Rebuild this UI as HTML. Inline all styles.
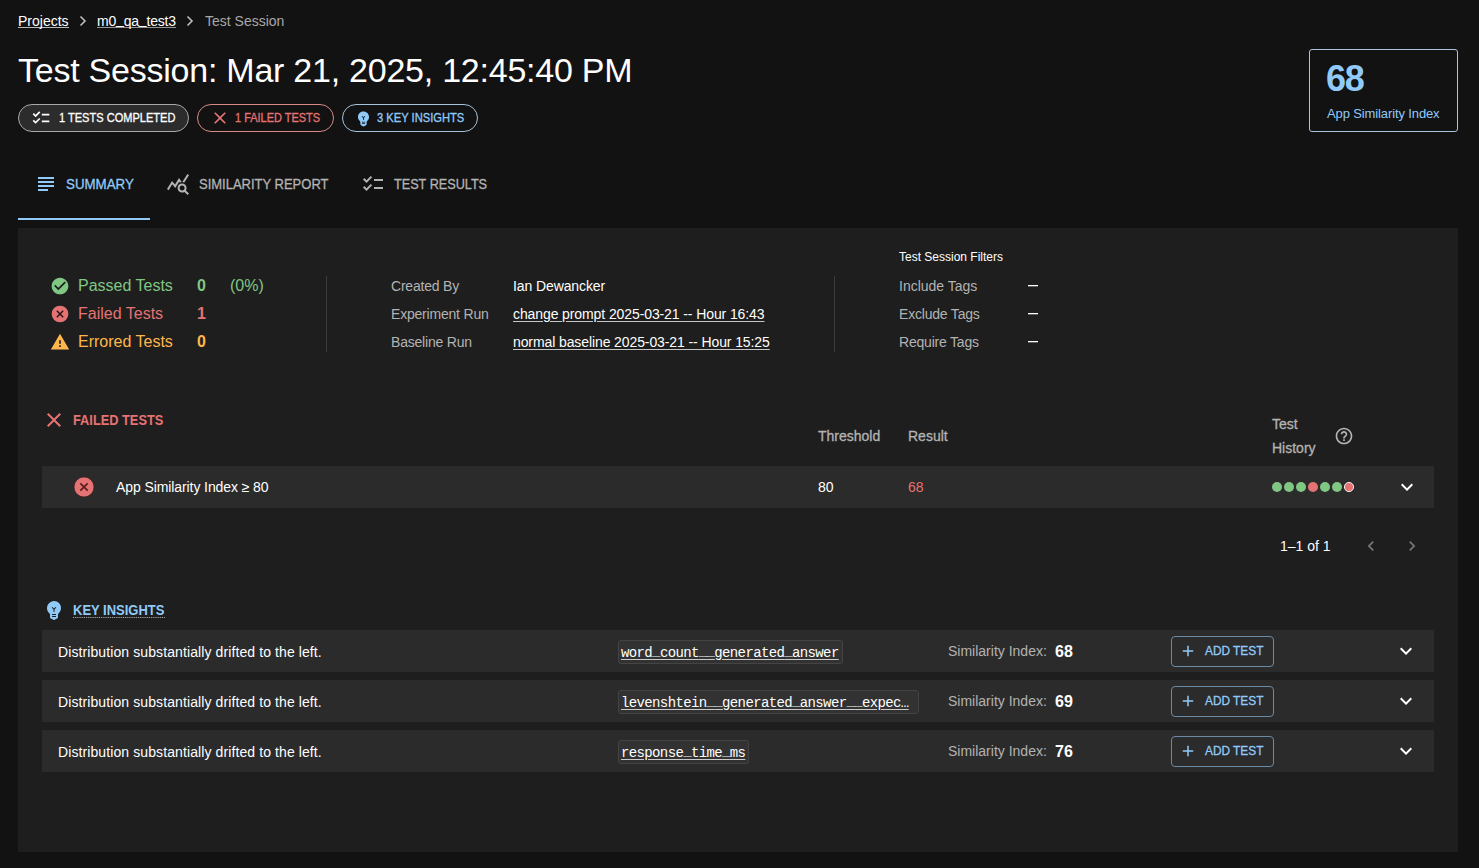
<!DOCTYPE html>
<html><head><meta charset="utf-8">
<style>
*{margin:0;padding:0;box-sizing:border-box}
html,body{width:1479px;height:868px;overflow:hidden;background:#121212;font-family:"Liberation Sans",sans-serif;color:#fff}
.a{position:absolute;white-space:nowrap;line-height:1}
svg{position:absolute;display:block}
.med{font-weight:normal;-webkit-text-stroke:0.3px currentColor}
.us{position:relative;top:-2px}
.ul{text-decoration:underline;text-underline-offset:2px;text-decoration-color:rgba(255,255,255,0.75)}
.chip{position:absolute;border-radius:14px;border:1px solid}
.panel{position:absolute;left:18px;top:228px;width:1440px;height:624px;background:#1e1e1e}
.row{position:absolute;left:42px;width:1392px;background:#2b2b2b}
.vsep{position:absolute;width:1px;background:#3d3d3d}
.codechip{position:absolute;left:618px;height:24px;border:1px solid #444;background:#323232;border-radius:3px}
.btn{position:absolute;left:1171px;width:103px;height:31px;border:1px solid #6a8aa6;border-radius:4px}
</style></head>
<body>
<!-- breadcrumb -->
<div class="a" id="bc1" style="left:18px;top:14px;font-size:14px;color:#fff">Projects</div>
<div style="position:absolute;left:18px;top:27px;width:51px;height:1px;background:rgba(255,255,255,0.7)"></div>
<svg style="left:78px;top:15px" width="10" height="12" viewBox="0 0 10 12"><path d="M2.5 1.5 L7 6 L2.5 10.5" stroke="#bdbdbd" stroke-width="1.6" fill="none"/></svg>
<div class="a" id="bc2" style="left:97px;top:14px;font-size:14px;color:#fff;letter-spacing:-0.2px">m0<span style="position:relative;top:-2px">_</span>qa<span style="position:relative;top:-2px">_</span>test3</div>
<div style="position:absolute;left:97px;top:27px;width:79px;height:1px;background:rgba(255,255,255,0.55)"></div>
<svg style="left:185px;top:15px" width="10" height="12" viewBox="0 0 10 12"><path d="M2.5 1.5 L7 6 L2.5 10.5" stroke="#bdbdbd" stroke-width="1.6" fill="none"/></svg>
<div class="a" id="bc3" style="left:205px;top:14px;font-size:14px;color:#a8a8a8">Test Session</div>

<!-- title -->
<div class="a" id="title" style="left:18px;top:53px;font-size:34px;color:#fff;letter-spacing:-0.24px">Test Session: Mar 21, 2025, 12:45:40 PM</div>

<!-- chips -->
<div class="chip" style="left:18px;top:104px;width:171px;height:28px;background:#2c2c2c;border-color:#a8a8a8"></div>
<div class="a med" id="chip1" style="left:59px;top:112px;font-size:12px;color:#fff;transform:scaleX(0.92);transform-origin:0 0">1 TESTS COMPLETED</div>
<div class="chip" style="left:197px;top:104px;width:137px;height:28px;border-color:#d58a88"></div>
<div class="a med" id="chip2" style="left:235px;top:112px;font-size:12px;color:#e57373;transform:scaleX(0.914);transform-origin:0 0">1 FAILED TESTS</div>
<div class="chip" style="left:342px;top:104px;width:136px;height:28px;border-color:#a6c2dc"></div>
<div class="a med" id="chip3" style="left:377px;top:112px;font-size:12px;color:#90caf9;transform:scaleX(0.93);transform-origin:0 0">3 KEY INSIGHTS</div>

<!-- similarity box -->
<div style="position:absolute;left:1309px;top:49px;width:149px;height:83px;border:1px solid #a9c5de;border-radius:3px"></div>
<div class="a" id="bigval" style="left:1326px;top:60.8px;font-size:36px;font-weight:bold;color:#90caf9;letter-spacing:-1.2px">68</div>
<div class="a" id="simlabel" style="left:1327px;top:107px;font-size:13px;color:#90caf9;letter-spacing:-0.12px">App Similarity Index</div>

<!-- tabs -->
<div class="a med" id="tab1" style="left:65.8px;top:177px;font-size:14px;color:#90caf9;transform:scaleX(0.951);transform-origin:0 0">SUMMARY</div>
<div class="a med" id="tab2" style="left:198.5px;top:177px;font-size:14px;color:#b3b3b3;transform:scaleX(0.928);transform-origin:0 0">SIMILARITY REPORT</div>
<div class="a med" id="tab3" style="left:394.3px;top:177px;font-size:14px;color:#b3b3b3;transform:scaleX(0.904);transform-origin:0 0">TEST RESULTS</div>
<div style="position:absolute;left:18px;top:218px;width:132px;height:2px;background:#90caf9"></div>


<svg style="left:31px;top:108px" width="20" height="20" viewBox="0 0 24 24"><path fill="#fff" d="M22 7h-9v2h9V7zm0 8h-9v2h9v-2zM5.54 11 2 7.46l1.41-1.41 2.12 2.12 4.24-4.24 1.41 1.41L5.54 11zm0 8L2 15.46l1.41-1.41 2.12 2.12 4.24-4.24 1.41 1.41L5.54 19z"/></svg>
<svg style="left:210px;top:108px" width="20" height="20" viewBox="0 0 24 24"><path fill="#e57373" d="M19 6.41 17.59 5 12 10.59 6.41 5 5 6.41 10.59 12 5 17.59 6.41 19 12 13.41 17.59 19 19 17.59 13.41 12z"/></svg>
<svg style="left:354px;top:109px" width="19" height="19" viewBox="0 0 24 24"><path fill="#90caf9" d="M12 3c-.46 0-.93.04-1.4.14-2.76.53-4.96 2.76-5.48 5.52-.48 2.61.48 5.01 2.22 6.56.43.38.66.91.66 1.47V19c0 1.1.9 2 2 2h.28c.35.6.98 1 1.72 1s1.38-.4 1.72-1H14c1.1 0 2-.9 2-2v-2.31c0-.55.22-1.09.64-1.46C18.09 13.95 19 12.08 19 10c0-3.87-3.13-7-7-7zm2 16h-4v-1h4v1zm0-2h-4v-1h4v1zm-1.5-5.59V14h-1v-2.59L9.67 9.59l.71-.71L12 10.5l1.62-1.62.71.71-1.83 1.83z"/></svg>
<svg style="left:34px;top:172px" width="24" height="24" viewBox="0 0 24 24"><path fill="#90caf9" d="M14 17H4v2h10v-2zm6-8H4v2h16V9zM4 15h16v-2H4v2zM4 5v2h16V5H4z"/></svg>
<svg style="left:166px;top:172px" width="24" height="24" viewBox="0 0 24 24"><path fill="#b3b3b3" d="M19.88 18.47c.44-.7.7-1.51.7-2.39 0-2.49-2.01-4.5-4.5-4.5s-4.5 2.01-4.5 4.5 2.01 4.5 4.49 4.5c.88 0 1.7-.26 2.39-.7L21.58 23 23 21.58l-3.12-3.11zm-3.8.11c-1.38 0-2.5-1.12-2.5-2.5s1.12-2.5 2.5-2.5 2.5 1.12 2.5 2.5-1.12 2.5-2.5 2.5zm-.36-8.5c-.74.02-1.45.18-2.1.45l-.55-.83-3.8 6.18-3.01-3.52-3.630 5.81L1 17l5-8 3 3.5L13 6l2.72 4.08zm2.59.5c-.64-.28-1.33-.45-2.05-.49L21.38 2 23 3.18l-4.69 7.4z"/></svg>
<svg style="left:361px;top:172px" width="24" height="24" viewBox="0 0 24 24"><path fill="#b3b3b3" d="M22 7h-9v2h9V7zm0 8h-9v2h9v-2zM5.54 11 2 7.46l1.41-1.41 2.12 2.12 4.24-4.24 1.41 1.41L5.54 11zm0 8L2 15.46l1.41-1.41 2.12 2.12 4.24-4.24 1.41 1.41L5.54 19z"/></svg>

<!-- panel -->
<div class="panel"></div>


<!-- stats -->
<svg style="left:50px;top:276px" width="20" height="20" viewBox="0 0 24 24"><path fill="#81c784" d="M12 2C6.48 2 2 6.48 2 12s4.48 10 10 10 10-4.48 10-10S17.52 2 12 2zm-2 15-5-5 1.41-1.41L10 14.17l7.59-7.59L19 8l-9 9z"/></svg>
<div class="a" id="st1" style="left:78px;top:277.6px;font-size:16px;color:#81c784">Passed Tests</div>
<div class="a" id="st1n" style="left:197px;top:277.6px;font-size:16px;font-weight:bold;color:#81c784">0</div>
<div class="a" id="st1p" style="left:230px;top:277.6px;font-size:16px;color:#81c784">(0%)</div>
<svg style="left:50px;top:304px" width="20" height="20" viewBox="0 0 24 24"><circle cx="12" cy="12" r="10" fill="#e57373"/><path d="M8.2 8.2L15.8 15.8M15.8 8.2L8.2 15.8" stroke="#2a1414" stroke-width="1.8"/></svg>
<div class="a" id="st2" style="left:78px;top:305.8px;font-size:16px;color:#e57373">Failed Tests</div>
<div class="a" id="st2n" style="left:197px;top:305.8px;font-size:16px;font-weight:bold;color:#e57373">1</div>
<svg style="left:50px;top:332px" width="20" height="20" viewBox="0 0 24 24"><path fill="#ffb74d" d="M1 21h22L12 2 1 21zm12-3h-2v-2h2v2zm0-4h-2v-4h2v4z"/></svg>
<div class="a" id="st3" style="left:78px;top:333.7px;font-size:16px;color:#ffb74d">Errored Tests</div>
<div class="a" id="st3n" style="left:197px;top:333.7px;font-size:16px;font-weight:bold;color:#ffb74d">0</div>
<div class="vsep" style="left:326px;top:276px;height:76px"></div>

<div class="a" id="cb1" style="left:391px;top:279px;font-size:14px;color:#b3b3b3;letter-spacing:-0.2px">Created By</div>
<div class="a" id="cb2" style="left:391px;top:307px;font-size:14px;color:#b3b3b3;letter-spacing:-0.2px">Experiment Run</div>
<div class="a" id="cb3" style="left:391px;top:335px;font-size:14px;color:#b3b3b3;letter-spacing:-0.2px">Baseline Run</div>
<div class="a" id="cv1" style="left:513px;top:279px;font-size:14px;color:#fff;letter-spacing:-0.1px">Ian Dewancker</div>
<div class="a ul" id="cv2" style="left:513px;top:307px;font-size:14px;color:#fff;letter-spacing:-0.1px">change prompt 2025-03-21 -- Hour 16:43</div>
<div class="a ul" id="cv3" style="left:513px;top:335px;font-size:14px;color:#fff;letter-spacing:-0.1px">normal baseline 2025-03-21 -- Hour 15:25</div>
<div class="vsep" style="left:834px;top:276px;height:76px"></div>

<div class="a" id="fh" style="left:899px;top:250.6px;font-size:12px;color:#fff">Test Session Filters</div>
<div class="a" id="f1" style="left:899px;top:279px;font-size:14px;color:#b3b3b3">Include Tags</div>
<div class="a" id="f2" style="left:899px;top:307px;font-size:14px;color:#b3b3b3;letter-spacing:-0.2px">Exclude Tags</div>
<div class="a" id="f3" style="left:899px;top:335px;font-size:14px;color:#b3b3b3;letter-spacing:-0.2px">Require Tags</div>
<div style="position:absolute;left:1028px;top:285px;width:10px;height:1px;background:#fff;box-shadow:0 1px 0 rgba(255,255,255,0.3)"></div>
<div style="position:absolute;left:1028px;top:313px;width:10px;height:1px;background:#fff;box-shadow:0 1px 0 rgba(255,255,255,0.3)"></div>
<div style="position:absolute;left:1028px;top:341px;width:10px;height:1px;background:#fff;box-shadow:0 1px 0 rgba(255,255,255,0.3)"></div>

<!-- failed tests -->
<svg style="left:42px;top:408px" width="24" height="24" viewBox="0 0 24 24"><path fill="#e57373" d="M19 6.41 17.59 5 12 10.59 6.41 5 5 6.41 10.59 12 5 17.59 6.41 19 12 13.41 17.59 19 19 17.59 13.41 12z"/></svg>
<div class="a" id="fth" style="left:73px;top:412.8px;font-size:14px;font-weight:bold;color:#e57373;transform:scaleX(0.914);transform-origin:0 0">FAILED TESTS</div>
<div class="a med" id="th1" style="left:818px;top:428.9px;font-size:14px;color:#b3b3b3">Threshold</div>
<div class="a med" id="th2" style="left:908px;top:428.9px;font-size:14px;color:#b3b3b3">Result</div>
<div class="a med" id="th3" style="left:1272px;top:416.9px;font-size:14px;color:#b3b3b3">Test</div>
<div class="a med" id="th4" style="left:1272px;top:440.8px;font-size:14px;color:#b3b3b3">History</div>
<svg style="left:1334px;top:426px" width="20" height="20" viewBox="0 0 24 24"><path fill="#b3b3b3" d="M11 18h2v-2h-2v2zm1-16C6.48 2 2 6.480 2 12s4.48 10 10 10 10-4.48 10-10S17.52 2 12 2zm0 18c-4.41 0-8-3.59-8-8s3.59-8 8-8 8 3.59 8 8-3.59 8-8 8zm0-14c-2.21 0-4 1.79-4 4h2c0-1.1.9-2 2-2s2 .9 2 2c0 2-3 1.75-3 5h2c0-2.25 3-2.5 3-5 0-2.21-1.79-4-4-4z"/></svg>
<div class="row" style="top:466px;height:42px"></div>
<svg style="left:72px;top:475px" width="24" height="24" viewBox="0 0 24 24"><circle cx="12" cy="12" r="10" fill="#e57373" stroke="#3a1818" stroke-width="0.6"/><path d="M8.3 8.3L15.7 15.7M15.7 8.3L8.3 15.7" stroke="#5a1d1d" stroke-width="1.7"/></svg>
<div class="a" id="r1" style="left:116px;top:480.4px;font-size:14px;color:#fff;letter-spacing:-0.09px">App Similarity Index ≥ 80</div>
<div class="a" id="r2" style="left:818px;top:480.4px;font-size:14px;color:#fff">80</div>
<div class="a" id="r3" style="left:908px;top:480.4px;font-size:14px;color:#e57373">68</div>
<svg style="left:1270px;top:481px" width="90" height="12" viewBox="0 0 90 12">
<circle cx="7" cy="6" r="5" fill="#81c784"/><circle cx="19" cy="6" r="5" fill="#81c784"/><circle cx="31" cy="6" r="5" fill="#81c784"/><circle cx="43" cy="6" r="5" fill="#e57373"/><circle cx="55" cy="6" r="5" fill="#81c784"/><circle cx="67" cy="6" r="5" fill="#81c784"/><circle cx="79" cy="6" r="4.6" fill="#e57373" stroke="#fff" stroke-width="0.9"/></svg>
<svg style="left:1395px;top:475px" width="24" height="24" viewBox="0 0 24 24"><path fill="#fff" d="M16.59 8.59 12 13.17 7.41 8.59 6 10l6 6 6-6z"/></svg>

<div class="a" id="pg" style="left:1280px;top:539.4px;font-size:14px;color:#fff">1–1 of 1</div>
<svg style="left:1361px;top:536px" width="20" height="20" viewBox="0 0 24 24"><path fill="#777" d="M15.41 7.41 14 6l-6 6 6 6 1.410-1.41L10.83 12z"/></svg>
<svg style="left:1402px;top:536px" width="20" height="20" viewBox="0 0 24 24"><path fill="#777" d="M10 6 8.59 7.41 13.17 12l-4.58 4.59L10 18l6-6z"/></svg>

<!-- key insights -->
<svg style="left:42px;top:598px" width="24" height="24" viewBox="0 0 24 24"><path fill="#90caf9" d="M12 3c-.46 0-.93.04-1.4.14-2.76.53-4.96 2.76-5.48 5.52-.48 2.61.48 5.01 2.22 6.56.43.38.66.91.66 1.47V19c0 1.1.9 2 2 2h.28c.35.6.98 1 1.72 1s1.38-.4 1.72-1H14c1.1 0 2-.9 2-2v-2.31c0-.55.22-1.09.64-1.46C18.09 13.95 19 12.08 19 10c0-3.87-3.130-7-7-7zm2 16h-4v-1h4v1zm0-2h-4v-1h4v1zm-1.5-5.59V14h-1v-2.59L9.67 9.59l.71-.71L12 10.5l1.62-1.62.71.71-1.83 1.83z"/></svg>
<div class="a" id="kih" style="left:73px;top:602.8px;font-weight:bold;font-size:14px;color:#90caf9;border-bottom:1px dotted rgba(255,255,255,0.7);padding-bottom:0;transform:scaleX(0.928);transform-origin:0 0">KEY INSIGHTS</div>
<div class="row" style="top:630px;height:42px"></div>
<div class="a" id="ir0" style="left:58px;top:644.8px;font-size:14px;color:#fff;letter-spacing:0.1px">Distribution substantially drifted to the left.</div>
<div class="codechip" style="top:640px;width:225px"></div>
<div class="a ul" id="ic0" style="left:621px;top:645.7px;font-size:14px;letter-spacing:-0.63px;font-family:'Liberation Mono',monospace;color:#fff;text-underline-offset:2px">word<span class="us">_</span>count<span class="us">_</span><span class="us">_</span>generated<span class="us">_</span>answer</div>
<div class="a" id="is0" style="left:948px;top:644.1px;font-size:14px;color:#b3b3b3">Similarity Index:</div>
<div class="a" id="iv0" style="left:1055px;top:643.7px;font-size:16px;font-weight:bold;color:#fff">68</div>
<div class="btn" style="top:636px"></div>
<svg style="left:1179px;top:642px" width="18" height="18" viewBox="0 0 24 24"><path fill="#90caf9" d="M19 13h-6v6h-2v-6H5v-2h6V5h2v6h6v2z"/></svg>
<div class="a med" id="ib0" style="left:1205px;top:643.6px;font-size:13px;color:#90caf9;transform:scaleX(0.912);transform-origin:0 0">ADD TEST</div>
<svg style="left:1394px;top:639px" width="24" height="24" viewBox="0 0 24 24"><path fill="#fff" d="M16.59 8.59 12 13.17 7.41 8.59 6 10l6 6 6-6z"/></svg>
<div class="row" style="top:680px;height:42px"></div>
<div class="a" id="ir1" style="left:58px;top:694.8px;font-size:14px;color:#fff;letter-spacing:0.1px">Distribution substantially drifted to the left.</div>
<div class="codechip" style="top:690px;width:301px"></div>
<div class="a ul" id="ic1" style="left:621px;top:695.7px;font-size:14px;letter-spacing:-0.63px;font-family:'Liberation Mono',monospace;color:#fff;text-underline-offset:2px">levenshtein<span class="us">_</span><span class="us">_</span>generated<span class="us">_</span>answer<span class="us">_</span><span class="us">_</span>expec…</div>
<div class="a" id="is1" style="left:948px;top:694.1px;font-size:14px;color:#b3b3b3">Similarity Index:</div>
<div class="a" id="iv1" style="left:1055px;top:693.7px;font-size:16px;font-weight:bold;color:#fff">69</div>
<div class="btn" style="top:686px"></div>
<svg style="left:1179px;top:692px" width="18" height="18" viewBox="0 0 24 24"><path fill="#90caf9" d="M19 13h-6v6h-2v-6H5v-2h6V5h2v6h6v2z"/></svg>
<div class="a med" id="ib1" style="left:1205px;top:693.6px;font-size:13px;color:#90caf9;transform:scaleX(0.912);transform-origin:0 0">ADD TEST</div>
<svg style="left:1394px;top:689px" width="24" height="24" viewBox="0 0 24 24"><path fill="#fff" d="M16.59 8.59 12 13.17 7.41 8.59 6 10l6 6 6-6z"/></svg>
<div class="row" style="top:730px;height:42px"></div>
<div class="a" id="ir2" style="left:58px;top:744.8px;font-size:14px;color:#fff;letter-spacing:0.1px">Distribution substantially drifted to the left.</div>
<div class="codechip" style="top:740px;width:131px"></div>
<div class="a ul" id="ic2" style="left:621px;top:745.7px;font-size:14px;letter-spacing:-0.63px;font-family:'Liberation Mono',monospace;color:#fff;text-underline-offset:2px">response<span class="us">_</span>time<span class="us">_</span>ms</div>
<div class="a" id="is2" style="left:948px;top:744.1px;font-size:14px;color:#b3b3b3">Similarity Index:</div>
<div class="a" id="iv2" style="left:1055px;top:743.7px;font-size:16px;font-weight:bold;color:#fff">76</div>
<div class="btn" style="top:736px"></div>
<svg style="left:1179px;top:742px" width="18" height="18" viewBox="0 0 24 24"><path fill="#90caf9" d="M19 13h-6v6h-2v-6H5v-2h6V5h2v6h6v2z"/></svg>
<div class="a med" id="ib2" style="left:1205px;top:743.6px;font-size:13px;color:#90caf9;transform:scaleX(0.912);transform-origin:0 0">ADD TEST</div>
<svg style="left:1394px;top:739px" width="24" height="24" viewBox="0 0 24 24"><path fill="#fff" d="M16.59 8.59 12 13.17 7.41 8.59 6 10l6 6 6-6z"/></svg>

</body></html>
